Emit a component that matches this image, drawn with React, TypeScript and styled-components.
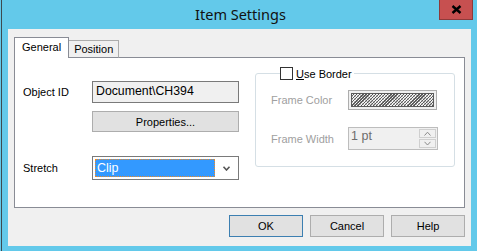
import React from "react"
import styled, { createGlobalStyle } from "styled-components"

const GlobalStyle = createGlobalStyle`
    html, body {
        margin: 0;
        padding: 0;
    }
    body {
        width: 477px;
        height: 251px;
        overflow: hidden;
        font-family: "Liberation Sans", Arial, sans-serif;
        font-size: 11px;
        color: #000;
    }
`

const Window = styled.div`
    width: 477px;
    height: 251px;
    box-sizing: border-box;
    padding: 0 6px 5px 8px;
    display: flex;
    flex-direction: column;
    background: linear-gradient(to right, #63c9ea 0 1px, #3d4a50 1px 2px, #63c9ea 2px);
`

const TitleBar = styled.div`
    height: 29px;
    display: grid;
    grid-template-columns: 1fr auto 1fr;
    margin-right: -2px;
`

const Title = styled.div`
    grid-column: 2;
    padding-top: 4px;
    line-height: 21px;
    font-family: "Noto Sans", "Open Sans", sans-serif;
    font-size: 14.5px;
    color: #111;
`

const CloseButton = styled.div`
    grid-column: 3;
    justify-self: end;
    width: 32px;
    height: 19px;
    background: #c75050;
    border: 1px solid #8e3a3a;
    border-top: none;
    display: flex;
    align-items: center;
    justify-content: center;
`

const Client = styled.div`
    flex: 1;
    background: #f0f0f0;
    padding: 8px 6px 9px 6px;
    display: flex;
    flex-direction: column;
`

const TabStrip = styled.div`
    display: flex;
    align-items: flex-end;
    height: 21px;
    margin-bottom: -1px;
    position: relative;
    z-index: 1;
`

const Tab = styled.div<{ $active?: boolean }>`
    box-sizing: border-box;
    height: ${(p) => (p.$active ? "21px" : "18px")};
    padding: ${(p) => (p.$active ? "3px 7px 0 7px" : "2px 5px 0 5px")};
    background: ${(p) => (p.$active ? "#fff" : "#f0f0f0")};
    border: 1px solid ${(p) => (p.$active ? "#898c95" : "#acacac")};
    border-bottom: ${(p) => (p.$active ? "none" : "1px solid #898c95")};
    margin-left: ${(p) => (p.$active ? "0" : "-1px")};
    z-index: ${(p) => (p.$active ? 2 : 1)};
    line-height: 13px;
`

const Panel = styled.div`
    height: 151px;
    box-sizing: border-box;
    background: #fff;
    border: 1px solid #898c95;
    display: flex;
    padding: 9px 9px 0 8px;
    gap: 16px;
`

const LeftColumn = styled.div`
    display: flex;
    flex-direction: column;
    padding-top: 14px;
`

const FieldRow = styled.div<{ $gap?: number }>`
    display: grid;
    grid-template-columns: 69px 147px;
    align-items: center;
    margin-top: ${(p) => p.$gap ?? 0}px;
`

const Label = styled.span<{ $disabled?: boolean }>`
    color: ${(p) => (p.$disabled ? "#a0a0a0" : "#000")};
    font-size: 11px;
`

const TextBox = styled.div`
    grid-column: 2;
    box-sizing: border-box;
    height: 22px;
    background: #f0f0f0;
    border: 1px solid #7a7a7a;
    padding: 2px 3px;
    font-size: 12.3px;
    line-height: 15px;
`

const Button = styled.div<{ $default?: boolean; $width?: number; $height?: number }>`
    grid-column: 2;
    box-sizing: border-box;
    width: ${(p) => (p.$width ? `${p.$width}px` : "auto")};
    height: ${(p) => p.$height ?? 22}px;
    background: #e1e1e1;
    border: 1px solid ${(p) => (p.$default ? "#3c7fb1" : "#adadad")};
    display: flex;
    align-items: center;
    justify-content: center;
    font-size: 11px;
`

const Combo = styled.div`
    grid-column: 2;
    box-sizing: border-box;
    height: 24px;
    border: 1px solid #7a7a7a;
    background: #fff;
    padding: 2px;
    display: flex;
    align-items: stretch;
`

const ComboValue = styled.div`
    flex: 1;
    background: #3399ff;
    border: 1px dotted #f08a24;
    color: #fff;
    font-size: 12.5px;
    line-height: 16px;
    padding-left: 1px;
`

const ComboArrow = styled.div`
    width: 19px;
    display: flex;
    align-items: center;
    justify-content: center;
    padding-left: 2px;
`

const GroupBox = styled.fieldset`
    margin: 0;
    width: 200px;
    height: 100px;
    box-sizing: border-box;
    border: 1px solid #d5dfe5;
    border-radius: 3px;
    padding: 10px 0 0 15px;
    display: flex;
    flex-direction: column;
    gap: 17px;
`

const Legend = styled.legend`
    margin-left: 9px;
    padding: 0 2px 0 0;
    display: flex;
    align-items: center;
    gap: 3px;
    height: 13px;
`

const CheckBox = styled.span`
    width: 13px;
    height: 13px;
    box-sizing: border-box;
    border: 1px solid #333;
    background: #fff;
`

const GroupRow = styled.div`
    display: grid;
    grid-template-columns: 77px auto;
    align-items: center;
`

const Swatch = styled.div`
    width: 89px;
    height: 20px;
    box-sizing: border-box;
    border: 1px solid #adadad;
    background: #f0f0f0;
    padding: 2px;
    display: flex;
`

const Hatch = styled.div`
    flex: 1;
    border: 1px solid #5a5a5a;
    background-color: #f4f4f4;
    background-image:
        repeating-linear-gradient(-45deg, rgba(70, 70, 70, 0.85) 0 1px, transparent 1px 2.2px),
        repeating-linear-gradient(45deg, rgba(90, 90, 90, 0.35) 0 1px, transparent 1px 2.2px);
`

const Spin = styled.div`
    width: 90px;
    height: 23px;
    box-sizing: border-box;
    border: 1px solid #bdbdbd;
    background: #f0f0f0;
    display: flex;
`

const SpinText = styled.div`
    flex: 1;
    color: #6d6d6d;
    font-size: 12.5px;
    line-height: 15px;
    padding: 1px 2px;
`

const SpinButtons = styled.div`
    width: 17px;
    display: flex;
    flex-direction: column;
    gap: 1px;
    padding: 1px 1px 1px 0;
`

const SpinButton = styled.div`
    flex: 1;
    border: 1px solid #cfcfcf;
    background: #f0f0f0;
    display: flex;
    align-items: center;
    justify-content: center;
`

const ButtonRow = styled.div`
    display: flex;
    justify-content: flex-end;
    gap: 7px;
    margin-top: 7px;
`

const Chevron = ({ up, color, w = 7 }: { up?: boolean; color: string; w?: number }) => (
    <svg width={w} height="5" viewBox="0 0 7 5">
        <path d={up ? "M0.5 4.5 L3.5 1.2 L6.5 4.5" : "M0.5 0.8 L3.5 4 L6.5 0.8"} fill="none" stroke={color} strokeWidth={up || w < 9 ? 1 : 1.6} />
    </svg>
)

export default function App() {
    return (
        <>
            <GlobalStyle />
            <Window>
                <TitleBar>
                    <Title>Item Settings</Title>
                    <CloseButton>
                        <svg width="11" height="9" viewBox="0 0 11 9">
                            <path d="M1.5 1 L9.5 8 M9.5 1 L1.5 8" stroke="#000" strokeWidth="2.4" />
                        </svg>
                    </CloseButton>
                </TitleBar>
                <Client>
                    <TabStrip>
                        <Tab $active>General</Tab>
                        <Tab>Position</Tab>
                    </TabStrip>
                    <Panel>
                        <LeftColumn>
                            <FieldRow>
                                <Label>Object ID</Label>
                                <TextBox>Document\CH394</TextBox>
                            </FieldRow>
                            <FieldRow $gap={8}>
                                <Button $height={21}>Properties...</Button>
                            </FieldRow>
                            <FieldRow $gap={24}>
                                <Label>Stretch</Label>
                                <Combo>
                                    <ComboValue>Clip</ComboValue>
                                    <ComboArrow>
                                        <Chevron color="#555" w={9} />
                                    </ComboArrow>
                                </Combo>
                            </FieldRow>
                        </LeftColumn>
                        <GroupBox>
                            <Legend>
                                <CheckBox />
                                <span><u>U</u>se Border</span>
                            </Legend>
                            <GroupRow>
                                <Label $disabled>Frame Color</Label>
                                <Swatch><Hatch /></Swatch>
                            </GroupRow>
                            <GroupRow>
                                <Label $disabled>Frame Width</Label>
                                <Spin>
                                    <SpinText>1 pt</SpinText>
                                    <SpinButtons>
                                        <SpinButton><Chevron up color="#8a8a8a" /></SpinButton>
                                        <SpinButton><Chevron color="#8a8a8a" /></SpinButton>
                                    </SpinButtons>
                                </Spin>
                            </GroupRow>
                        </GroupBox>
                    </Panel>
                    <ButtonRow>
                        <Button $default $width={74}>OK</Button>
                        <Button $width={74}>Cancel</Button>
                        <Button $width={74}>Help</Button>
                    </ButtonRow>
                </Client>
            </Window>
        </>
    )
}
